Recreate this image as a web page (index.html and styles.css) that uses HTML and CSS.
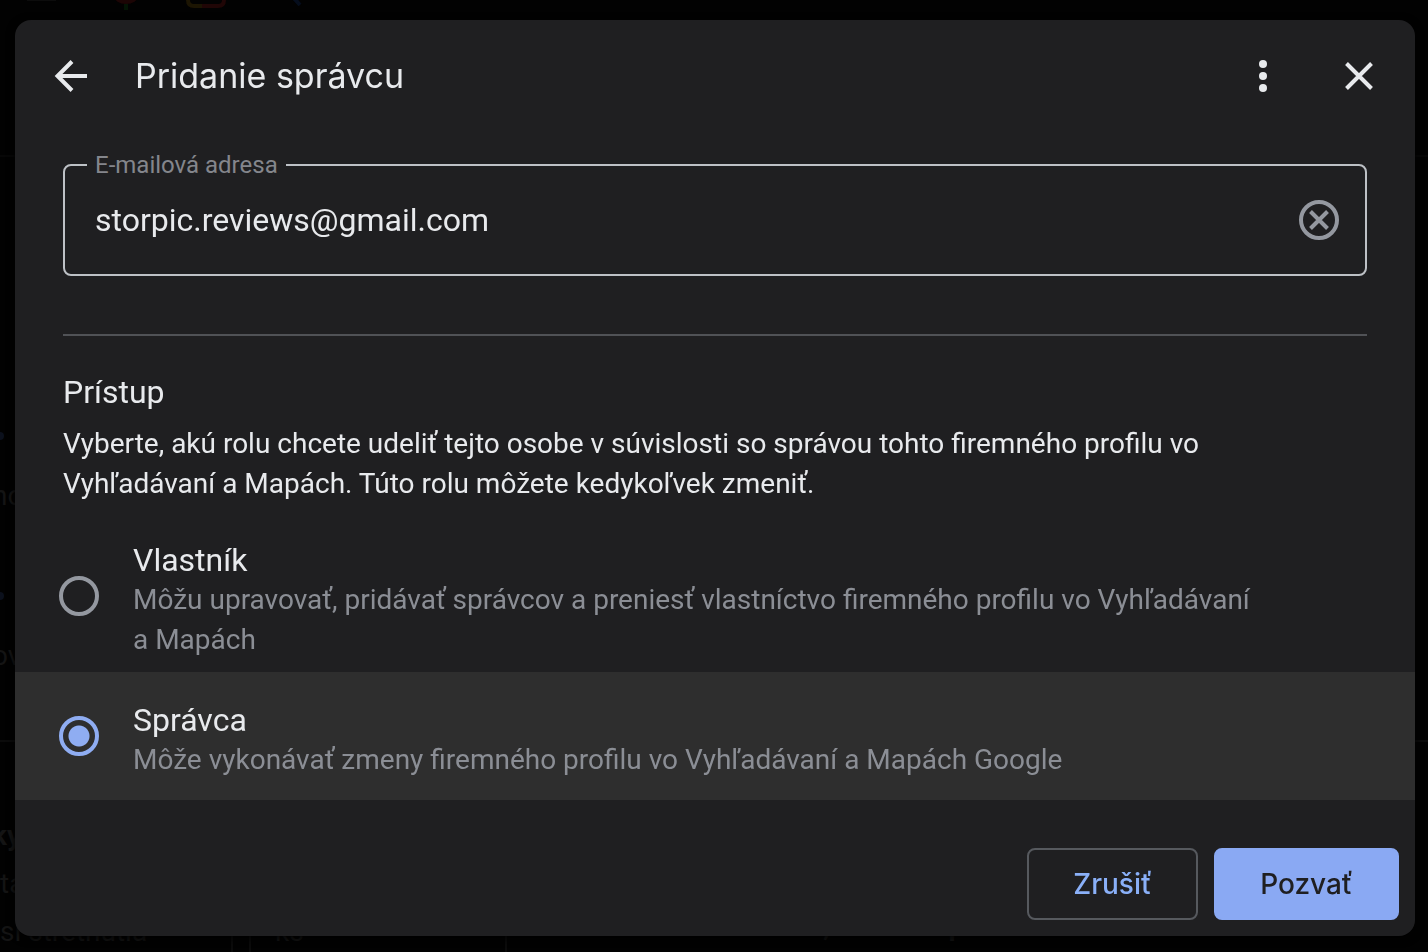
FILE: index.html
```
<!DOCTYPE html>
<html lang="sk">

<head>
  <meta charset="UTF-8" />
  <meta name="viewport" content="width=device-width, initial-scale=1.0" />
  <title>Pridanie správcu</title>
  <link rel="stylesheet" href="styles.css">
</head>

<body>
  <!-- page behind the dialog -->
  <div class="page" aria-hidden="true">
    <div class="page-tools">
      <svg width="360" height="12" viewBox="0 0 360 12" fill="none">
        <path d="M27 0h29" stroke="#0c0c0c" stroke-width="2" />
        <path d="M114 -4a12 8 0 0 0 24 0z" fill="#1c0505" />
        <path d="M126 4v6" stroke="#041405" stroke-width="4" />
        <path d="M188 -2v2q0 6 6 6h8" stroke="#1c1503" stroke-width="4" />
        <path d="M202 6h16q6 0 6-6v-2" stroke="#200606" stroke-width="4" />
        <path d="M292 -4l8 9" stroke="#050d1c" stroke-width="4" />
      </svg>
    </div>
    <div class="page-side">
      <i class="dot"></i>
      <p>no</p>
      <i class="dot"></i>
      <p>ov</p>
    </div>
    <div class="page-cards">
      <div class="card card-first">
        <b>ky</b>
        <span>tá</span>
        <span>si stretnutia</span>
      </div>
      <div class="card card-second"><span>ks</span></div>
      <div class="card card-third"><b>Hurocar Bratislava 764, 900 01 Spišská Dolá</b></div>
    </div>
  </div>

  <div class="overlay">
    <form class="dialog" role="dialog" aria-labelledby="dialog_title" onsubmit="return false">
      <header class="header">
        <button class="icon-button" type="button" aria-label="Späť">
          <svg width="48" height="48" viewBox="0 0 48 48" fill="none" stroke="currentColor" stroke-width="4">
            <path d="M40 24H11M25 9.500L10.500 24L25 38.500" />
          </svg>
        </button>
        <h1 id="dialog_title">Pridanie správcu</h1>
        <button class="icon-button" type="button" aria-label="Ďalšie možnosti">
          <svg width="48" height="48" viewBox="0 0 48 48" fill="currentColor">
            <circle cx="24" cy="12" r="4" />
            <circle cx="24" cy="24" r="4" />
            <circle cx="24" cy="36" r="4" />
          </svg>
        </button>
        <button class="icon-button" type="button" aria-label="Zavrieť">
          <svg width="48" height="48" viewBox="0 0 48 48" fill="none" stroke="currentColor" stroke-width="4">
            <path d="M11.500 11.500L36.500 36.500M36.500 11.500L11.500 36.500" />
          </svg>
        </button>
      </header>

      <div class="content">
        <div class="field">
          <label for="email">E-mailová adresa</label>
          <input type="text" id="email" name="email" value="storpic.reviews@gmail.com" />
          <button class="icon-button clear" type="button" aria-label="Vymazať">
            <svg width="48" height="48" viewBox="0 0 48 48" fill="none" stroke="currentColor" stroke-width="4">
              <circle cx="24" cy="24" r="18" />
              <path d="M15.500 15.500L32.500 32.500M32.500 15.500L15.500 32.500" />
            </svg>
          </button>
        </div>
        <hr />
        <h2>Prístup</h2>
        <p class="intro">Vyberte, akú rolu chcete udeliť tejto osobe v súvislosti so správou tohto firemného profilu vo Vyhľadávaní&nbsp;a&nbsp;Mapách. Túto rolu môžete kedykoľvek zmeniť.</p>
      </div>

      <div class="roles">
        <label class="role" for="role_owner">
          <input type="radio" id="role_owner" name="role" value="owner" />
          <span class="role-text">
            <span class="role-name">Vlastník</span>
            <span class="role-info">Môžu upravovať, pridávať správcov a preniesť vlastníctvo firemného profilu vo Vyhľadávaní a&nbsp;Mapách</span>
          </span>
        </label>
        <label class="role" for="role_manager">
          <input type="radio" id="role_manager" name="role" value="manager" checked />
          <span class="role-text">
            <span class="role-name">Správca</span>
            <span class="role-info">Môže vykonávať zmeny firemného profilu vo Vyhľadávaní a Mapách Google</span>
          </span>
        </label>
      </div>

      <footer class="footer">
        <button class="button" type="button">Zrušiť</button>
        <button class="button button-primary" type="submit">Pozvať</button>
      </footer>
    </form>
  </div>
</body>

</html>
```
FILE: styles.css
```
* {
  box-sizing: border-box;
}

body {
  font-family: Roboto, "Liberation Sans", sans-serif;
  background-color: #020202;
  color: #e8eaed;
  margin: 0;
}

h1,
h2,
p {
  margin: 0;
  font-weight: 400;
}

/* page behind the dialog */
.page {
  height: 100vh;
  overflow: hidden;
  display: flex;
  flex-direction: column;
  color: #141414;
  font-size: 28px;
  line-height: 40px;
}

.page-tools {
  height: 157px;
  border-bottom: 2px solid #070707;
}

.page-tools svg {
  display: block;
}

.page-side {
  flex: 1;
  display: flex;
  flex-direction: column;
  gap: 36px;
  padding-top: 275px;
  border-bottom: 2px solid #0b0b0b;
}

.page-side p {
  margin-left: -8px;
  height: 80px;
}

.dot {
  width: 8px;
  height: 8px;
  margin-left: -4px;
  border-radius: 50%;
  background-color: #0b101c;
}

.page-cards {
  display: flex;
  gap: 16px;
  height: 210px;
}

.card {
  display: flex;
  flex-direction: column;
  justify-content: flex-end;
  border-right: 2px solid #0b0b0b;
}

.card-first {
  width: 233px;
  gap: 8px;
}

.card-first b {
  margin-left: -8px;
}

.card-second {
  width: 258px;
  padding-left: 24px;
  border-left: 2px solid #0b0b0b;
}

.card-third {
  padding: 0 0 6px 12px;
  border: none;
}

/* dialog */
.overlay {
  position: fixed;
  inset: 0;
  padding: 20px 13px 16px 15px;
  overflow: auto;
}

.dialog {
  background-color: #1f1f21;
  border-radius: 16px;
  min-height: 100%;
  display: flex;
  flex-direction: column;
  box-shadow: 0 2px 8px #000;
}

.header {
  display: flex;
  align-items: center;
  gap: 48px;
  padding: 32px;
}

.header h1 {
  flex: 1;
  margin-left: -8px;
  font-family: Inter, Roboto, sans-serif;
  font-size: 34px;
  line-height: 48px;
}

.icon-button {
  padding: 0;
  border: none;
  background: none;
  color: inherit;
  cursor: pointer;
}

.icon-button svg {
  display: block;
}

.content {
  padding: 32px 48px 16px;
}

.field {
  position: relative;
  display: flex;
  align-items: center;
  height: 112px;
  padding: 0 22px 0 30px;
  border: 2px solid #bdc1c6;
  border-radius: 8px;
}

.field label {
  position: absolute;
  top: -17px;
  left: 22px;
  padding: 0 8px;
  background-color: #1f1f21;
  color: #84868c;
  font-size: 24px;
  line-height: 32px;
}

.field input {
  flex: 1;
  min-width: 0;
  padding: 0;
  border: none;
  outline: none;
  background: none;
  color: inherit;
  font-family: inherit;
  font-size: 32px;
  line-height: 48px;
}

.clear {
  color: #9498a0;
}

hr {
  margin: 58px 0 36px;
  border: none;
  border-top: 2px solid #505256;
}

h2 {
  margin-bottom: 12px;
  font-size: 32px;
  line-height: 40px;
}

.intro {
  max-width: 1240px;
  font-size: 28px;
  line-height: 40px;
}

.role {
  display: flex;
  align-items: center;
  gap: 34px;
  min-height: 128px;
  padding: 20px 48px 12px 44px;
  cursor: pointer;
}

.role:has(input:checked) {
  background-color: #2e2e2e;
}

.role input {
  appearance: none;
  flex: none;
  width: 40px;
  height: 40px;
  margin: 0 0 8px;
  border: 4px solid #9498a0;
  border-radius: 50%;
}

.role input:checked {
  border-color: #8fadf2;
  background: radial-gradient(circle, #8fadf2 10px, transparent 11px);
}

.role-name,
.role-info {
  display: block;
  font-size: 32px;
  line-height: 40px;
}

.role-info {
  color: #8b8e95;
  font-size: 28px;
}

.footer {
  display: flex;
  justify-content: flex-end;
  gap: 16px;
  margin-top: auto;
  padding: 48px 16px 16px;
}

.button {
  height: 72px;
  padding: 0 44px;
  border: 2px solid #56595e;
  border-radius: 8px;
  background: none;
  color: #8ab0f8;
  font-family: Inter, Roboto, sans-serif;
  font-size: 28px;
  font-weight: 500;
  cursor: pointer;
}

.button-primary {
  border-color: #8aa9f3;
  background-color: #8aa9f3;
  color: #1f1f21;
}
```
